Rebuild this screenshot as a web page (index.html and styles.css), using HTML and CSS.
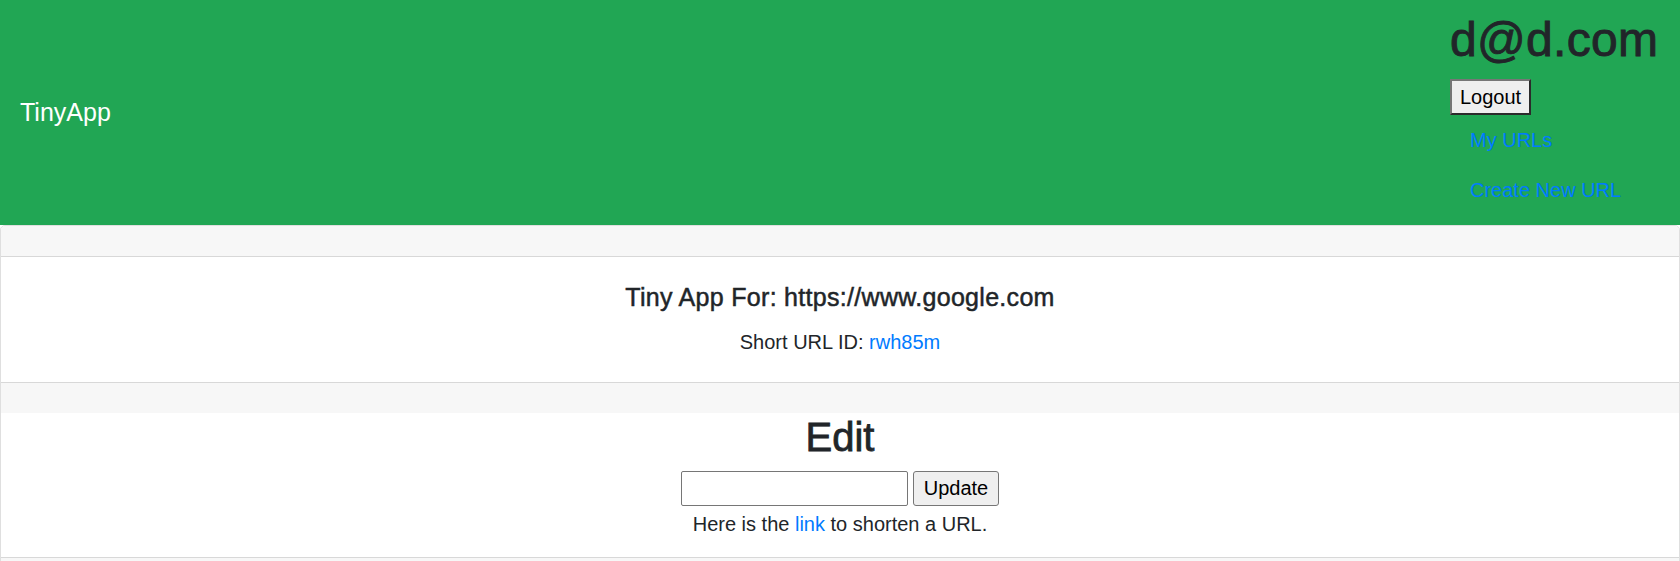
FILE: index.html
```html
<!DOCTYPE html>
<html lang="en">
<head>
<meta charset="utf-8">
<title>TinyApp</title>
<link rel="stylesheet" href="styles.css">
</head>
<body>
<nav class="navbar">
  <a class="brand" href="#">TinyApp</a>
  <div class="account">
    <h1 class="user">d@d.com</h1>
    <form class="logout-form"><button type="button" class="logout">Logout</button></form>
    <ul class="nav-links">
      <li><a href="#">My URLs</a></li>
      <li><a href="#">Create New URL</a></li>
    </ul>
  </div>
</nav>
<div class="card">
  <div class="card-header"></div>
  <div class="card-body">
    <h5 class="card-title">Tiny App For: https://www.google.com</h5>
    <p class="card-text">Short URL ID: <a href="#">rwh85m</a></p>
  </div>
  <div class="card-footer"></div>
  <div class="edit">
    <h2 class="edit-title">Edit</h2>
    <form class="edit-form">
      <input class="url-input" type="text">
      <button type="button" class="update">Update</button>
    </form>
    <p class="edit-note">Here is the <a href="#">link</a> to shorten a URL.</p>
  </div>
  <div class="card-footer"></div>
</div>
</body>
</html>
```
FILE: styles.css
```css
* { box-sizing: border-box; }
body {
  margin: 0;
  font-family: "Liberation Sans", Arial, sans-serif;
  font-size: 20px;
  line-height: 1.5;
  color: #212529;
  background: #fff;
}
a { color: #007bff; text-decoration: none; }

.navbar {
  display: flex;
  justify-content: space-between;
  align-items: center;
  padding: 10px 20px;
  background: #21a654;
}
.brand {
  color: #fff;
  font-size: 25px;
  line-height: 37px;
}
.account { width: 210px; }
.user {
  margin: 0 0 10px;
  font-size: 48px;
  line-height: 59px;
  font-weight: 500;
  color: #212529;
  -webkit-text-stroke: 0.9px #212529;
  letter-spacing: 0.3px;
  white-space: nowrap;
}
.logout-form { margin: 0; }
.logout {
  font-family: inherit;
  font-size: 20px;
  line-height: 30px;
  padding: 1px 8px;
  background: #efefef;
  color: #000;
  border: 2px solid;
  border-color: #767676 #2b2b2b #2b2b2b #767676;
  border-radius: 0;
}
.nav-links { list-style: none; margin: 0; padding: 0; }
.nav-links a {
  display: block;
  padding: 10px 20px;
  line-height: 30px;
  white-space: nowrap;
}

.card {
  border: 1px solid rgba(0,0,0,.125);
  border-radius: 5px;
  text-align: center;
  overflow: hidden;
}
.card-header {
  height: 31px;
  background: #f7f7f7;
  border-bottom: 1px solid rgba(0,0,0,.125);
}
.card-body { padding: 25px; }
.card-title {
  margin: 0 0 15px;
  font-size: 25px;
  line-height: 30px;
  font-weight: 500;
  letter-spacing: 0.3px;
  -webkit-text-stroke: 0.5px #212529;
}
.card-text { margin: 0; }
.card-footer {
  height: 31px;
  background: #f7f7f7;
  border-top: 1px solid rgba(0,0,0,.125);
}
.edit-title {
  margin: 0 0 10px;
  font-size: 40px;
  line-height: 48px;
  font-weight: 500;
  -webkit-text-stroke: 0.8px #212529;
}
.edit-form {
  display: flex;
  justify-content: center;
  gap: 5px;
  margin: 0;
}
.url-input {
  width: 227px;
  height: 35px;
  border: 1px solid #767676;
  border-radius: 2px;
  padding: 1px 2px;
  font-family: inherit;
  font-size: 20px;
}
.update {
  height: 35px;
  padding: 0 10px;
  font-family: inherit;
  font-size: 20px;
  color: #000;
  background: #efefef;
  border: 1px solid #767676;
  border-radius: 3px;
}
.edit-note { margin: 0 0 18px; padding-top: 3px; }
```
